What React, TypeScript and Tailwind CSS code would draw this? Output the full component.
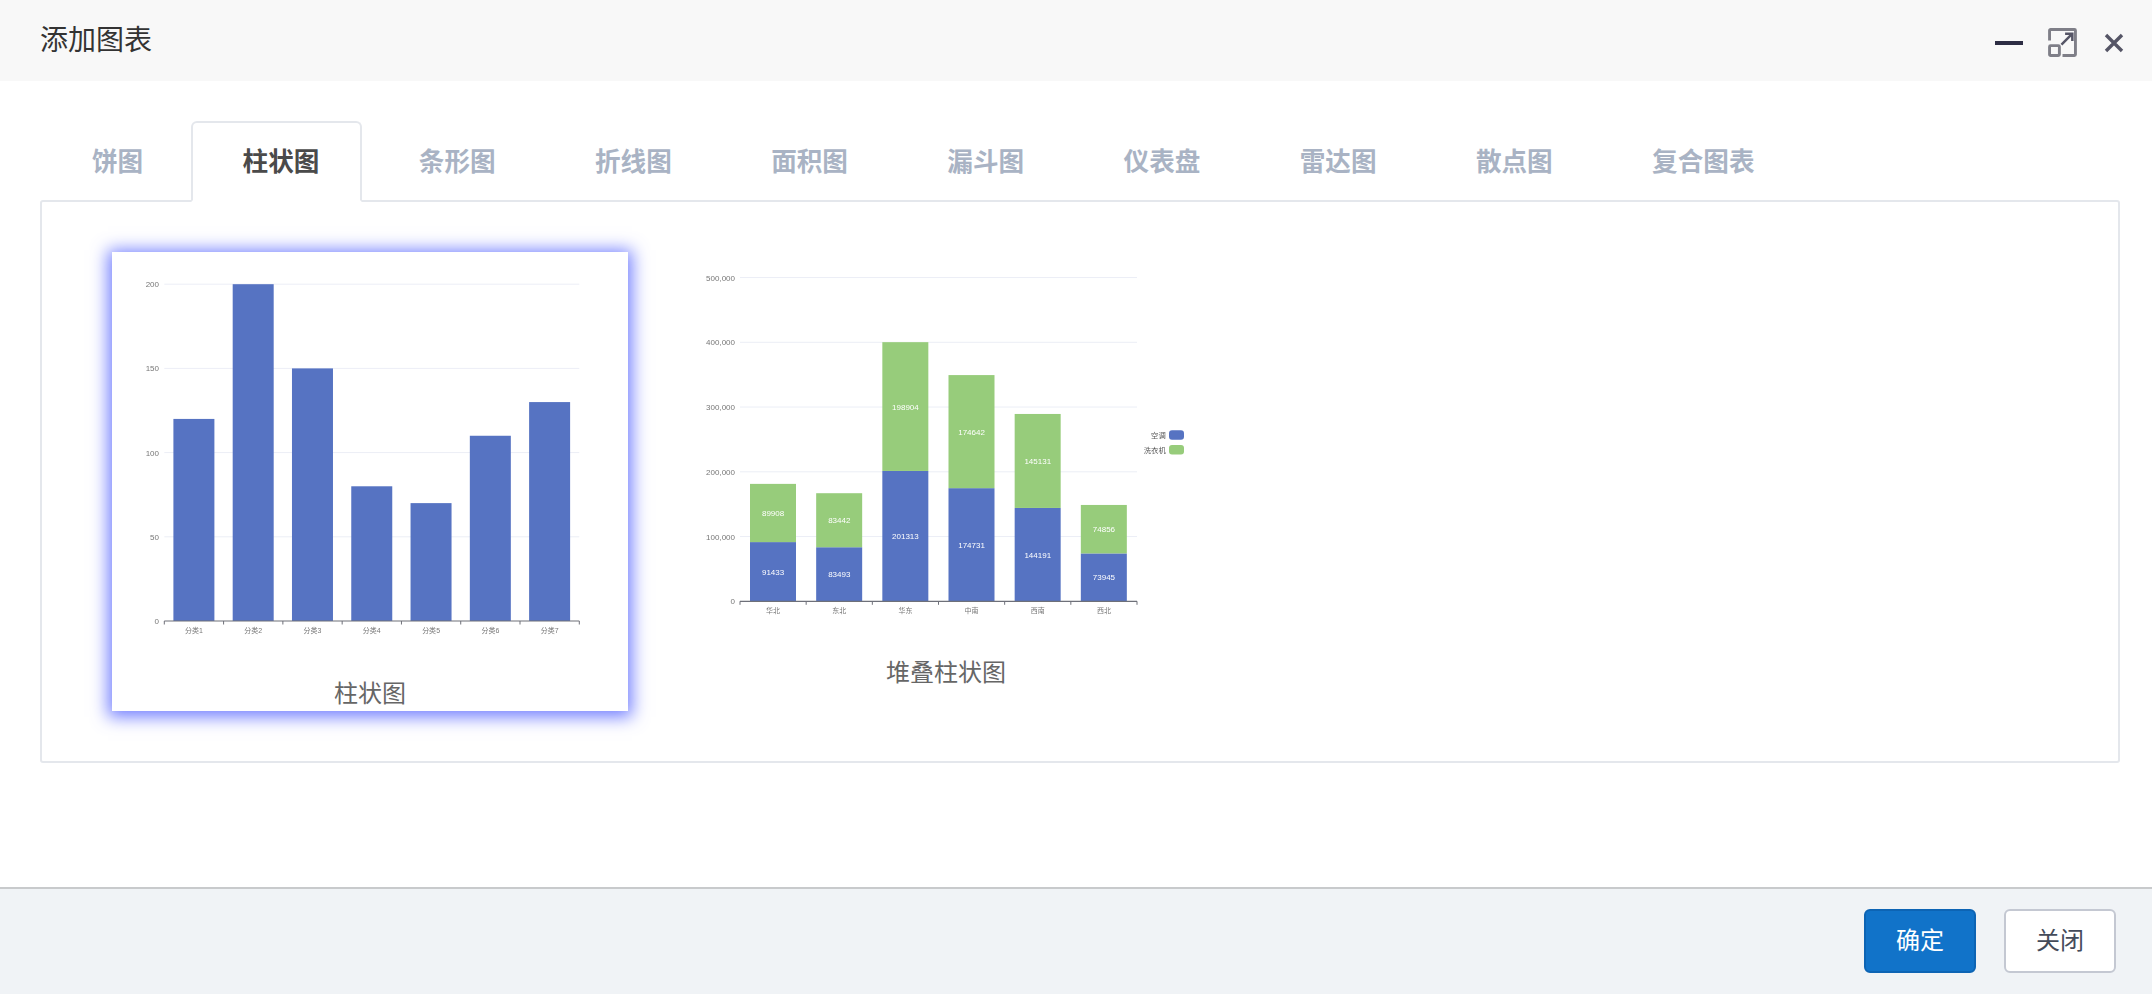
const TABS = ["饼图", "柱状图", "条形图", "折线图", "面积图", "漏斗图", "仪表盘", "雷达图", "散点图", "复合图表"];

const BLUE = "#5673c2";
const GREEN = "#97cc7b";
const GRID = "#eceef6";
const AXIS = "#6e7079";
const LABEL = "#777777";

function BarChart() {
  const values = [120, 200, 150, 80, 70, 110, 130];
  const left = 52.3;
  const right = 467.3;
  const base = 369;
  const unit = 1.684;
  const band = (right - left) / values.length;
  return (
    <svg width="516" height="424" viewBox="0 0 516 424" className="block blur-[0.4px]">
      {[50, 100, 150, 200].map((v) => (
        <line key={v} x1={left} x2={right} y1={base - v * unit} y2={base - v * unit} stroke={GRID} />
      ))}
      {[0, 50, 100, 150, 200].map((v) => (
        <text key={v} x="47" y={base - v * unit + 3} textAnchor="end" fontSize="8" fill={LABEL}>
          {v}
        </text>
      ))}
      {values.map((v, i) => (
        <rect key={i} x={left + band * i + 9.1} y={base - v * unit} width="41" height={v * unit} fill={BLUE} />
      ))}
      <line x1={left} x2={right} y1={base} y2={base} stroke={AXIS} strokeWidth="1.2" />
      {values.map((_, i) => (
        <line key={i} x1={left + band * i} x2={left + band * i} y1={base} y2={base + 3.5} stroke={AXIS} />
      ))}
      <line x1={right} x2={right} y1={base} y2={base + 3.5} stroke={AXIS} />
      {values.map((_, i) => (
        <text key={i} x={left + band * (i + 0.5)} y="381" textAnchor="middle" fontSize="7" fill={LABEL}>
          分类{i + 1}
        </text>
      ))}
    </svg>
  );
}

function StackedChart() {
  const rows = [
    { name: "华北", a: 91433, b: 89908 },
    { name: "东北", a: 83493, b: 83442 },
    { name: "华东", a: 201313, b: 198904 },
    { name: "中南", a: 174731, b: 174642 },
    { name: "西南", a: 144191, b: 145131 },
    { name: "西北", a: 73945, b: 74856 },
  ];
  const left = 52;
  const right = 449;
  const base = 349.3;
  const unit = 64.75 / 100000;
  const band = (right - left) / rows.length;
  return (
    <svg width="516" height="403" viewBox="0 0 516 403" className="block blur-[0.4px]">
      {[100000, 200000, 300000, 400000, 500000].map((v) => (
        <line key={v} x1={left} x2={right} y1={base - v * unit} y2={base - v * unit} stroke={GRID} />
      ))}
      {[0, 100000, 200000, 300000, 400000, 500000].map((v) => (
        <text key={v} x="47" y={base - v * unit + 3} textAnchor="end" fontSize="8" fill={LABEL}>
          {v.toLocaleString("en-US")}
        </text>
      ))}
      {rows.map((r, i) => {
        const x = left + band * i + 10;
        const cx = left + band * (i + 0.5);
        const h1 = r.a * unit;
        const h2 = r.b * unit;
        return (
          <g key={r.name}>
            <rect x={x} y={base - h1} width="46" height={h1} fill={BLUE} />
            <rect x={x} y={base - h1 - h2} width="46" height={h2} fill={GREEN} />
            <text x={cx} y={base - h1 / 2 + 3} textAnchor="middle" fontSize="8" fill="#ffffff">
              {r.a}
            </text>
            <text x={cx} y={base - h1 - h2 / 2 + 3} textAnchor="middle" fontSize="8" fill="#ffffff">
              {r.b}
            </text>
            <text x={cx} y="361" textAnchor="middle" fontSize="7" fill={LABEL}>
              {r.name}
            </text>
            <line x1={left + band * i} x2={left + band * i} y1={base} y2={base + 3.5} stroke={AXIS} />
          </g>
        );
      })}
      <line x1={left} x2={right} y1={base} y2={base} stroke={AXIS} strokeWidth="1.2" />
      <line x1={right} x2={right} y1={base} y2={base + 3.5} stroke={AXIS} />
      <text x="477.7" y="186" textAnchor="end" fontSize="7.3" fill="#555555">
        空调
      </text>
      <rect x="481" y="178.3" width="15" height="9.5" rx="3" fill={BLUE} />
      <text x="477.7" y="200.5" textAnchor="end" fontSize="7.3" fill="#555555">
        洗衣机
      </text>
      <rect x="481" y="193" width="15" height="9.5" rx="3" fill={GREEN} />
    </svg>
  );
}

function MaximizeIcon() {
  return (
    <svg width="29" height="29" viewBox="0 0 28 28" fill="none" className="block">
      <path
        d="M1.5 12V2.5a1 1 0 0 1 1-1h23a1 1 0 0 1 1 1v23a1 1 0 0 1-1 1H14"
        stroke="#7f7f88"
        strokeWidth="2.8"
      />
      <rect x="1.5" y="17" width="9.5" height="9.5" rx="1" stroke="#7f7f88" strokeWidth="2.8" />
      <path d="M13 16 23.5 5.5M16.5 5.5h7v7" stroke="#555566" strokeWidth="2.4" />
    </svg>
  );
}

function CloseIcon() {
  return (
    <svg width="20" height="20" viewBox="0 0 20 20" fill="none" className="block">
      <path d="M2 2 18 18M18 2 2 18" stroke="#555566" strokeWidth="3.4" />
    </svg>
  );
}

export default function App() {
  return (
    <div className="flex h-[994px] w-[2152px] flex-col overflow-hidden bg-white font-['Liberation_Sans','Noto_Sans_CJK_SC',sans-serif]">
      <div className="flex h-[81px] shrink-0 items-center justify-between bg-[#f8f8f8] pl-10 pr-[28px]">
        <h1 className="text-[28px] font-normal text-[#333333]">添加图表</h1>
        <div className="mt-1 flex items-center">
          <div className="h-1 w-7 bg-[#2d2d44]" />
          <div className="ml-[25px]">
            <MaximizeIcon />
          </div>
          <div className="ml-[27px]">
            <CloseIcon />
          </div>
        </div>
      </div>

      <div className="flex-1 pl-10 pr-8 pt-10">
        <div className="relative z-10 -mb-0.5 flex">
          {TABS.map((t) =>
            t === "柱状图" ? (
              <div
                key={t}
                className="mr-[5px] flex h-[81px] items-center rounded-t-md border-2 border-[#e4e7ec] border-b-white bg-white pl-[50px] pr-[40.4px] pt-0.5 text-[25.6px] font-bold text-[#4a4a4a]"
              >
                {t}
              </div>
            ) : (
              <div
                key={t}
                className="mr-[5px] flex h-[81px] items-center border-2 border-transparent pl-[50px] pr-[40.4px] pt-0.5 text-[25.6px] font-bold text-[#a9b3c4]"
              >
                {t}
              </div>
            ),
          )}
        </div>
        <div className="flex h-[563px] items-start gap-[60px] rounded-[3px] border-2 border-[#e4e7ec] pl-[70px] pt-[50px]">
          <div className="h-[459px] w-[516px] bg-white shadow-[0_2px_16px_4px_rgba(80,95,255,0.8)]">
            <BarChart />
            <div className="text-center text-[24px] leading-[35px] text-[#666666]">柱状图</div>
          </div>
          <div className="h-[459px] w-[516px]">
            <StackedChart />
            <div className="text-center text-[24px] leading-[36px] text-[#666666]">堆叠柱状图</div>
          </div>
        </div>
      </div>

      <div className="flex h-[107px] shrink-0 items-start justify-end gap-7 border-t-2 border-[#c8cacc] bg-[#f0f3f6] pr-9 pt-5">
        <button className="h-16 w-28 rounded-md border-2 border-[#0d64b4] bg-[#1173c9] text-[24px] text-white">确定</button>
        <button className="h-16 w-28 rounded-md border-2 border-[#c4c8d2] bg-white text-[24px] text-[#444b5a]">关闭</button>
      </div>
    </div>
  );
}
